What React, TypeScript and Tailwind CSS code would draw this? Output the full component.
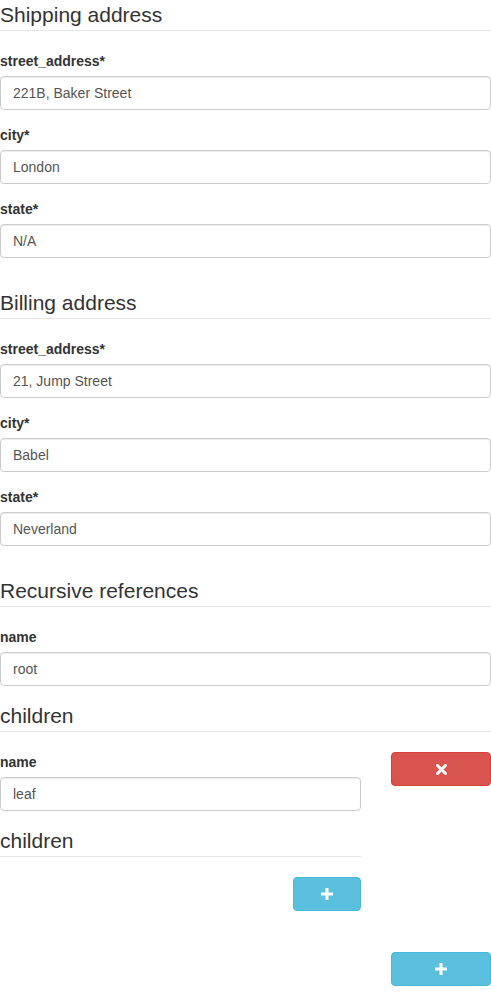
import React from 'react'

const font = "font-['Liberation_Sans','Helvetica_Neue',Arial,sans-serif]"

function Legend({ children }: { children: React.ReactNode }) {
  return (
    <div className="text-[21px] leading-[30px] text-[#333] border-b border-[#e5e5e5] mb-[20px]">
      {children}
    </div>
  )
}

function Field({ label, value }: { label: string; value: string }) {
  return (
    <div className="mb-[15px]">
      <label className="block font-bold mb-[5px] text-[#333]">{label}</label>
      <div className="h-[34px] px-[12px] py-[6px] border border-[#ccc] rounded-[4px] text-[#555] bg-white shadow-[inset_0_1px_1px_rgba(0,0,0,0.075)] leading-[20px]">
        {value}
      </div>
    </div>
  )
}

function PlusIcon() {
  return (
    <svg width="12" height="12" viewBox="0 0 12 12">
      <path d="M4.5 0h3v4.5H12v3H7.5V12h-3V7.5H0v-3h4.5z" fill="white" />
    </svg>
  )
}

function RemoveIcon() {
  return (
    <svg width="11" height="11" viewBox="0 0 11 11">
      <path d="M1.5 1.5l8 8M9.5 1.5l-8 8" stroke="white" strokeWidth="3" strokeLinecap="square" />
    </svg>
  )
}

function AddButton({ wide }: { wide?: boolean }) {
  return (
    <button
      className={
        wide
          ? 'w-[100px] h-[34px] flex items-center justify-center rounded-[4px] bg-[#5bc0de] border border-[#46b8da]'
          : 'w-[68px] h-[34px] flex items-center justify-center rounded-[4px] bg-[#5bc0de] border border-[#46b8da]'
      }
    >
      <PlusIcon />
    </button>
  )
}

export default function App() {
  return (
    <div className={`${font} w-[491px] text-[14px] leading-[20px] text-[#333] bg-white min-h-[1000px]`}>
      {/* Shipping */}
      <div className="mb-[30px]">
        <Legend>Shipping address</Legend>
        <Field label="street_address*" value="221B, Baker Street" />
        <Field label="city*" value="London" />
        <Field label="state*" value="N/A" />
      </div>

      {/* Billing */}
      <div className="mb-[30px]">
        <Legend>Billing address</Legend>
        <Field label="street_address*" value="21, Jump Street" />
        <Field label="city*" value="Babel" />
        <Field label="state*" value="Neverland" />
      </div>

      {/* Recursive references */}
      <div>
        <Legend>Recursive references</Legend>
        <Field label="name" value="root" />
        <Legend>children</Legend>

        <div className="flex justify-between">
          <div className="w-[361px]">
            <Field label="name" value="leaf" />
            <Legend>children</Legend>
            <div className="flex justify-end">
              <AddButton />
            </div>
          </div>
          <div className="w-[100px]">
            <button className="w-[100px] h-[34px] flex items-center justify-center rounded-[4px] bg-[#d9534f] border border-[#d43f3a]">
              <RemoveIcon />
            </button>
          </div>
        </div>

        <div className="flex justify-end mt-[41px]">
          <AddButton wide />
        </div>
      </div>
    </div>
  )
}
